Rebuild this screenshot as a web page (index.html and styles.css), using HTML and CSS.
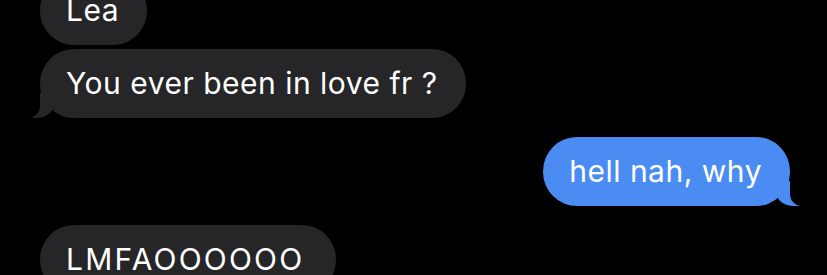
FILE: index.html
```html
<!DOCTYPE html>
<html lang="en">
<head>
  <meta charset="UTF-8">
  <link rel="stylesheet" href="styles.css">
</head>
<body>
  <div class="thread">
    <div class="row">
      <div class="bubble received">Lea</div>
    </div>
    <div class="row">
      <div class="bubble received tail">You ever been in love fr ?</div>
    </div>
    <div class="row sent-row">
      <div class="bubble sent tail">hell nah, why</div>
    </div>
    <div class="row">
      <div class="bubble received caps">LMFAOOOOOO</div>
    </div>
  </div>
</body>
</html>
```

FILE: styles.css
```css
html, body {
  margin: 0;
  padding: 0;
  background-color: #000;
  overflow: hidden;
}

body {
  font-family: 'Inter', 'Noto Sans', sans-serif;
  color: #fff;
}

.thread {
  display: flex;
  flex-direction: column;
  margin-top: -24px;
  padding: 0 37px 0 40px;
}

.row {
  display: flex;
  margin-bottom: 19px;
}

.row:first-child {
  margin-bottom: 4px;
}

.sent-row {
  justify-content: flex-end;
}

.bubble {
  position: relative;
  height: 69px;
  box-sizing: border-box;
  padding: 0 28px 1px 26px;
  display: flex;
  align-items: center;
  font-size: 30px;
  letter-spacing: 0.5px;
  border-radius: 34px;
}

.bubble.caps {
  letter-spacing: 2.2px;
  padding-right: 32px;
}

.received {
  background-color: #262628;
}

.sent {
  background-color: #4a8cf2;
}

/* tails */
.tail::before,
.tail::after {
  content: '';
  position: absolute;
  bottom: 0;
  height: 25px;
}

.received.tail::before {
  left: -10px;
  width: 24px;
  background-color: #262628;
  border-bottom-right-radius: 18px 14px;
}

.received.tail::after {
  left: -30px;
  width: 30px;
  background-color: #000;
  border-bottom-right-radius: 12px;
}

.sent.tail::before {
  right: -10px;
  width: 24px;
  background-color: #4a8cf2;
  border-bottom-left-radius: 18px 14px;
}

.sent.tail::after {
  right: -30px;
  width: 30px;
  background-color: #000;
  border-bottom-left-radius: 12px;
}
```
